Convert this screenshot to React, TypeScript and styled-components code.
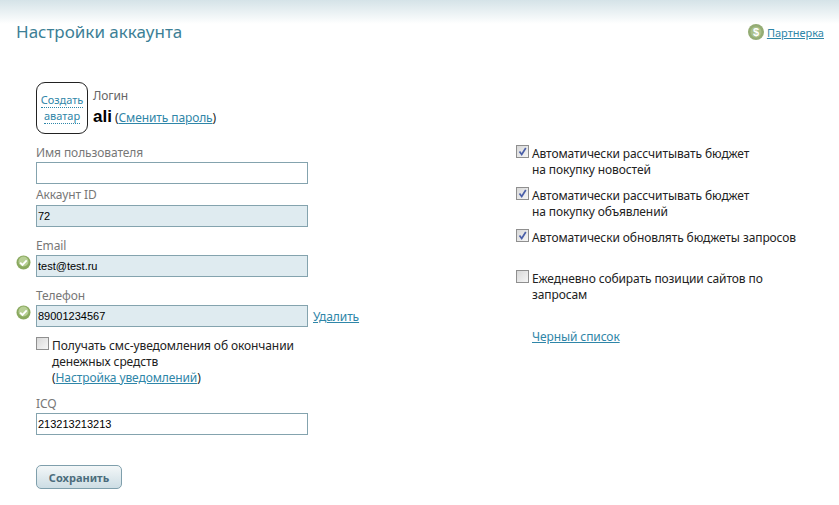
import * as React from "react";
import styled, { createGlobalStyle } from "styled-components";

const GlobalStyle = createGlobalStyle`
  html, body { margin: 0; padding: 0; background: #fff; }
  body {
    font-family: "Noto Sans", "DejaVu Sans", sans-serif;
    font-size: 12px;
    letter-spacing: -0.1px;
    color: #222;
  }
`;

const Page = styled.div`
  width: 839px;
  height: 505px;
  overflow: hidden;
  background: linear-gradient(to bottom, #d5e3e8 0, #f4f8f9 18px, #fff 24px);
`;

const Header = styled.div`
  display: flex;
  justify-content: space-between;
  align-items: flex-start;
  padding: 21px 15px 0 16px;
  height: 61px;
  box-sizing: border-box;
`;

const Title = styled.h1`
  margin: 0;
  font-family: "Noto Sans", sans-serif;
  font-size: 17px;
  line-height: 22px;
  font-weight: 400;
  letter-spacing: 0;
  color: #3d7f96;
`;

const Partner = styled.div`
  display: flex;
  align-items: center;
  gap: 3px;
  padding-top: 3px;
  font-size: 11px;
  letter-spacing: 0;
`;

const TextLink = styled.a`
  color: #2f86a8;
  text-decoration: underline;
  cursor: pointer;
`;

const Columns = styled.div`
  display: grid;
  grid-template-columns: 516px 1fr;
`;

const LeftColumn = styled.div`
  padding: 21px 0 0 36px;
`;

const RightColumn = styled.div`
  padding: 85px 0 0 0;
`;

const Profile = styled.div`
  display: flex;
  gap: 5px;
  height: 64px;
`;

const Avatar = styled.a`
  box-sizing: border-box;
  width: 52px;
  height: 52px;
  border: 1px solid #222;
  border-radius: 9px;
  display: flex;
  flex-direction: column;
  align-items: center;
  justify-content: center;
  gap: 1px;
  color: #2f86a8;
  font-size: 11px;
  line-height: 14px;
  letter-spacing: 0;
  cursor: pointer;
`;

const Dotted = styled.span`
  border-bottom: 1px dotted #2f86a8;
`;

const LoginInfo = styled.div`
  padding-top: 6px;
  color: #666;
  line-height: 16px;
`;

const LoginLine = styled.div`
  margin-top: 5px;
  color: #222;
  line-height: 16px;
`;

const LoginName = styled.b`
  font-family: "Liberation Sans", sans-serif;
  font-size: 17px;
  letter-spacing: 0;
  color: #000;
`;

const Field = styled.div<{ $gap: number }>`
  position: relative;
  margin-bottom: ${(p) => p.$gap}px;
`;

const FieldLabel = styled.div<{ $gap?: number }>`
  color: #777;
  line-height: 14px;
  margin-bottom: ${(p) => p.$gap ?? 2}px;
`;

const InputRow = styled.div`
  display: flex;
  align-items: center;
  gap: 5px;
`;

const Input = styled.input<{ $readOnly?: boolean }>`
  box-sizing: border-box;
  width: 272px;
  height: 22px;
  margin: 0;
  padding: 0 1px;
  border: 1px solid #84a3ae;
  border-radius: 0;
  outline: none;
  background: ${(p) => (p.$readOnly ? "#dfebf0" : "#fff")};
  font-family: "Liberation Sans", sans-serif;
  font-size: 11px;
  letter-spacing: 0;
  color: #000;
`;

const Verified = styled.svg`
  position: absolute;
  left: -20px;
  bottom: 7px;
`;

const Check = styled.label<{ $gap?: number }>`
  display: flex;
  align-items: flex-start;
  gap: 3px;
  margin-bottom: ${(p) => p.$gap ?? 0}px;
  line-height: 16px;
  color: #222;
`;

const Box = styled.span`
  flex: none;
  box-sizing: border-box;
  width: 13px;
  height: 13px;
  margin-top: -1px;
  border: 1px solid #8f8f8f;
  background: linear-gradient(135deg, #d8d8d8, #f6f6f6);
  display: flex;
  align-items: center;
  justify-content: center;
`;

const Save = styled.button`
  box-sizing: border-box;
  display: block;
  width: 86px;
  height: 24px;
  margin-top: 30px;
  padding: 0;
  border: 1px solid #7f9fac;
  border-radius: 5px;
  background: linear-gradient(to bottom, #f3f7f8, #cddde4);
  font-family: "Noto Sans", sans-serif;
  font-size: 11px;
  font-weight: 700;
  color: #4b6c7c;
`;

const BlackList = styled.div`
  padding: 25px 0 0 16px;
`;

const okIcon = (
  <Verified width="15" height="15" viewBox="0 0 15 15">
    <circle cx="7.5" cy="7.5" r="7" fill="#8aa95f" />
    <circle cx="7.5" cy="6.5" r="5" fill="#b7cf95" />
    <path d="M4.2 7.6l2.3 2.3 4.2-4.6" fill="none" stroke="#fff" strokeWidth="1.8" />
  </Verified>
);

const tick = (
  <svg width="9" height="9" viewBox="0 0 9 9">
    <path d="M1.5 4.5l2.2 3L7.8 1" fill="none" stroke="#4a5fa8" strokeWidth="1.7" />
  </svg>
);

export default function App() {
  return (
    <Page>
      <GlobalStyle />
      <Header>
        <Title>Настройки аккаунта</Title>
        <Partner>
          <svg width="16" height="16" viewBox="0 0 16 16">
            <circle cx="8" cy="8" r="8" fill="#94ac74" />
            <circle cx="8" cy="8" r="5.5" fill="#a9c08a" />
            <text x="8" y="12" textAnchor="middle" fontSize="11" fontWeight="700" fill="#fff" fontFamily="Liberation Sans">$</text>
          </svg>
          <TextLink>Партнерка</TextLink>
        </Partner>
      </Header>
      <Columns>
        <LeftColumn>
          <Profile>
            <Avatar>
              <Dotted>Создать</Dotted>
              <Dotted>аватар</Dotted>
            </Avatar>
            <LoginInfo>
              Логин
              <LoginLine>
                <LoginName>ali</LoginName> (<TextLink>Сменить пароль</TextLink>)
              </LoginLine>
            </LoginInfo>
          </Profile>
          <Field $gap={4}>
            <FieldLabel>Имя пользователя</FieldLabel>
            <Input />
          </Field>
          <Field $gap={12}>
            <FieldLabel $gap={3}>Аккаунт ID</FieldLabel>
            <Input $readOnly readOnly value="72" />
          </Field>
          <Field $gap={12}>
            <FieldLabel>Email</FieldLabel>
            <Input $readOnly readOnly value="test@test.ru" />
            {okIcon}
          </Field>
          <Field $gap={11}>
            <FieldLabel>Телефон</FieldLabel>
            <InputRow>
              <Input $readOnly readOnly value="89001234567" />
              <TextLink>Удалить</TextLink>
            </InputRow>
            {okIcon}
          </Field>
          <Check $gap={11}>
            <Box />
            <span>
              Получать смс-уведомления об окончании
              <br />
              денежных средств
              <br />(<TextLink>Настройка уведомлений</TextLink>)
            </span>
          </Check>
          <Field $gap={0}>
            <FieldLabel>ICQ</FieldLabel>
            <Input defaultValue="213213213213" />
          </Field>
          <Save>Сохранить</Save>
        </LeftColumn>
        <RightColumn>
          <Check $gap={10}>
            <Box>{tick}</Box>
            <span>
              Автоматически рассчитывать бюджет
              <br />
              на покупку новостей
            </span>
          </Check>
          <Check $gap={10}>
            <Box>{tick}</Box>
            <span>
              Автоматически рассчитывать бюджет
              <br />
              на покупку объявлений
            </span>
          </Check>
          <Check $gap={25}>
            <Box>{tick}</Box>
            <span>Автоматически обновлять бюджеты запросов</span>
          </Check>
          <Check>
            <Box />
            <span>
              Ежедневно собирать позиции сайтов по
              <br />
              запросам
            </span>
          </Check>
          <BlackList>
            <TextLink>Черный список</TextLink>
          </BlackList>
        </RightColumn>
      </Columns>
    </Page>
  );
}
